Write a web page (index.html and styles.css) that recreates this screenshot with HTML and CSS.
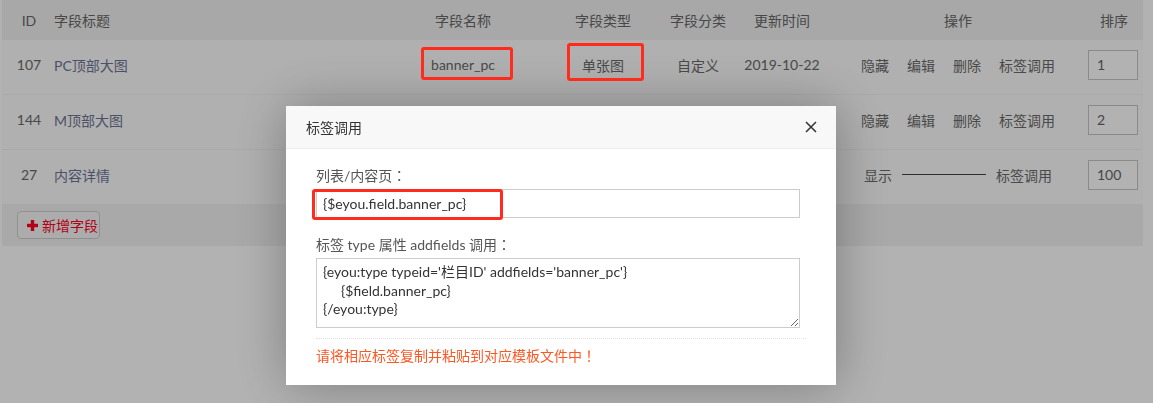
FILE: index.html
```html
<!DOCTYPE html>
<html lang="zh-CN">
<head>
<meta charset="utf-8">
<title>字段管理</title>
<link rel="stylesheet" href="styles.css">
</head>
<body>
<div class="page">
  <div class="table">
    <div class="row head">
      <div class="c c-id">ID</div>
      <div class="c c-title">字段标题</div>
      <div class="c c-name">字段名称</div>
      <div class="c c-type">字段类型</div>
      <div class="c c-cat">字段分类</div>
      <div class="c c-time">更新时间</div>
      <div class="c c-ops">操作</div>
      <div class="c c-sort">排序</div>
    </div>
    <div class="row body">
      <div class="c c-id">107</div>
      <div class="c c-title"><span class="title-link">PC顶部大图</span></div>
      <div class="c c-name mark-host">banner_pc<span class="mark mark-name"></span></div>
      <div class="c c-type mark-host">单张图<span class="mark mark-type"></span></div>
      <div class="c c-cat">自定义</div>
      <div class="c c-time">2019-10-22</div>
      <div class="c c-ops"><span class="op">隐藏</span><span class="op">编辑</span><span class="op">删除</span><span class="op">标签调用</span></div>
      <div class="c c-sort"><div class="sort-box">1</div></div>
    </div>
    <div class="row body">
      <div class="c c-id">144</div>
      <div class="c c-title"><span class="title-link">M顶部大图</span></div>
      <div class="c c-name">banner_m</div>
      <div class="c c-type">单张图</div>
      <div class="c c-cat">自定义</div>
      <div class="c c-time">2019-10-22</div>
      <div class="c c-ops"><span class="op">隐藏</span><span class="op">编辑</span><span class="op">删除</span><span class="op">标签调用</span></div>
      <div class="c c-sort"><div class="sort-box">2</div></div>
    </div>
    <div class="row body last">
      <div class="c c-id">27</div>
      <div class="c c-title"><span class="title-link">内容详情</span></div>
      <div class="c c-name">content</div>
      <div class="c c-type">HTML文本</div>
      <div class="c c-cat">系统</div>
      <div class="c c-time">2019-10-22</div>
      <div class="c c-ops ops-sys"><span class="op">显示</span><span class="dash"></span><span class="op">标签调用</span></div>
      <div class="c c-sort"><div class="sort-box">100</div></div>
    </div>
    <div class="foot">
      <span class="add-btn">
        <svg class="plus" width="11" height="11" viewBox="0 0 11 11"><rect x="3.8" y="0" width="3.4" height="11" fill="currentColor"/><rect x="0" y="3.8" width="11" height="3.4" fill="currentColor"/></svg>
        新增字段
      </span>
    </div>
  </div>
</div>

<div class="shade"></div>

<div class="modal">
  <div class="modal-head">
    <span class="modal-title">标签调用</span>
    <svg class="close" width="12" height="12" viewBox="0 0 12 12"><path d="M1 1 L11 11 M11 1 L1 11" stroke="#333" stroke-width="1.5" fill="none"/></svg>
  </div>
  <div class="modal-body">
    <div class="label">列表/内容页<span class="fw" lang="ja">：</span></div>
    <div class="input-wrap">
      <div class="input">{$eyou.field.banner_pc}</div>
      <span class="mark mark-input"></span>
    </div>
    <div class="label label2">标签 type 属性 addfields 调用<span class="fw" lang="ja">：</span></div>
    <textarea class="code" spellcheck="false">{eyou:type typeid='栏目ID' addfields='banner_pc'}
     {$field.banner_pc}
{/eyou:type}</textarea>
    <div class="sep"></div>
    <div class="tip">请将相应标签复制并粘贴到对应模板文件中<span class="fw" lang="ja">！</span></div>
  </div>
</div>
</body>
</html>
```

FILE: styles.css
```css
html, body {
  margin: 0;
  padding: 0;
}
body {
  background: #ffffff;
  font-family: Lato, "Noto Sans CJK SC", sans-serif;
  font-size: 14px;
  color: #6a6a6a;
  width: 1153px;
  height: 403px;
  overflow: hidden;
}
.fw {
  font-family: "Noto Sans CJK JP", sans-serif;
}
.page {
  padding: 0 10px 0 2px;
}
.table {
  width: 1141px;
}
.row {
  display: grid;
  grid-template-columns: 52px 334px 150px 130px 60px 108px 244px 63px;
}
.row.head {
  height: 40px;
  background: #f1f1f1;
  color: #676767;
  align-items: center;
}
.row.body {
  height: 55px;
  box-sizing: border-box;
  background: #fcfcfc;
  border-bottom: 1px solid #f3f3f3;
}
.row.body.last {
  height: 54px;
  border-bottom: 0;
}
.c {
  text-align: center;
  white-space: nowrap;
}
.row.body .c {
  display: flex;
  align-items: center;
  justify-content: center;
  padding-bottom: 5px;
  box-sizing: border-box;
}
.c-id {
  padding-left: 2px;
}
.c-title {
  text-align: left;
}
.row.body .c-title {
  justify-content: flex-start;
}
.title-link {
  color: #6e7596;
}
.row.head .c-sort {
  padding-left: 5px;
}
.row.body .c-sort {
  padding-left: 8px;
  justify-content: flex-start;
}
.mark-host {
  position: relative;
}
.mark {
  position: absolute;
  border: 3px solid #ff2b1c;
  border-radius: 3px;
  z-index: 30;
  box-sizing: border-box;
}
.mark-name {
  left: 33px;
  top: 7px;
  width: 92px;
  height: 33px;
}
.mark-type {
  left: 29px;
  top: 3px;
  width: 77px;
  height: 38px;
}
.row.body .c-ops {
  gap: 18px;
}
.row.body .ops-sys {
  gap: 10px;
}
.dash {
  display: inline-block;
  width: 84px;
  height: 1px;
  background: #444;
}
.sort-box {
  width: 50px;
  height: 30px;
  box-sizing: border-box;
  border: 1px solid #c6c6c6;
  background: #fff;
  padding-left: 8px;
  line-height: 28px;
  text-align: left;
  color: #666;
}
.foot {
  height: 42px;
  background: #f2f2f2;
  padding: 7px 15px;
  box-sizing: border-box;
}
.add-btn {
  display: inline-flex;
  align-items: center;
  gap: 4px;
  height: 28px;
  width: 83px;
  box-sizing: border-box;
  padding-left: 9px;
  border: 1px solid #cfcfcf;
  border-radius: 4px;
  background: #f7f7f7;
  color: #ff0022;
}
.plus {
  display: block;
}
.shade {
  position: fixed;
  inset: 0;
  background: rgba(0, 0, 0, 0.3);
  z-index: 10;
}
.modal {
  position: fixed;
  left: 286px;
  top: 106px;
  width: 550px;
  height: 279px;
  background: #fff;
  box-shadow: 1px 1px 50px rgba(0, 0, 0, 0.3);
  z-index: 20;
}
.modal-head {
  height: 42px;
  background: #f8f8f8;
  border-bottom: 1px solid #eee;
  display: flex;
  align-items: center;
  justify-content: space-between;
  padding: 0 19px 0 20px;
}
.modal-title {
  color: #333;
  font-size: 14px;
}
.close {
  display: block;
}
.modal-body {
  padding: 16px 30px 0 30px;
}
.label {
  line-height: 20px;
  color: #555;
  margin-bottom: 3px;
}
.label2 {
  margin-top: 16px;
  margin-bottom: 3px;
}
.input-wrap {
  position: relative;
}
.input {
  width: 484px;
  height: 29px;
  box-sizing: border-box;
  border: 1px solid #ccc;
  padding-left: 6px;
  line-height: 27px;
  font-size: 14px;
  color: #333;
}
.mark-input {
  left: -4px;
  top: 0;
  width: 191px;
  height: 31px;
}
.code {
  display: block;
  width: 484px;
  height: 70px;
  box-sizing: border-box;
  border: 1px solid #ccc;
  margin: 0;
  padding: 4px 6px;
  font-family: Lato, "Noto Sans CJK SC", sans-serif;
  font-size: 14px;
  line-height: 18.5px;
  color: #333;
  outline: none;
}
.sep {
  width: 490px;
  border-top: 1px dotted #ddd;
  margin-top: 10px;
}
.tip {
  margin-top: 6px;
  line-height: 20px;
  color: #ff5722;
}
```
